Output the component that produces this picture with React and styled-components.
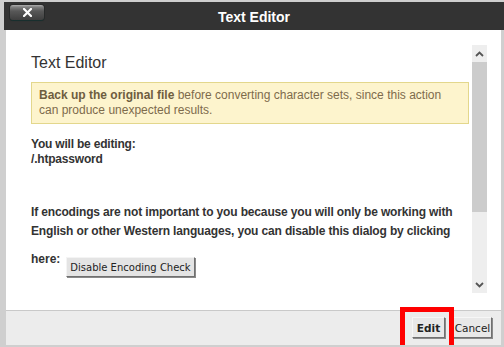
import React from 'react';
import styled, { createGlobalStyle } from 'styled-components';

const GlobalStyle = createGlobalStyle`
  body {
    margin: 0;
    background: #cfcfcf;
    font-family: 'Liberation Sans', Arial, sans-serif;
  }
`;

function CloseIcon() {
  return (
    <svg width="9" height="9" viewBox="0 0 9 9">
      <path d="M1 1 L8 8 M8 1 L1 8" stroke="#fff" strokeWidth="2.2" strokeLinecap="square" />
    </svg>
  );
}

function Chevron({ down }) {
  return (
    <svg width="9" height="6" viewBox="0 0 9 6">
      <path d={down ? 'M1 1 L4.5 4.5 L8 1' : 'M1 5 L4.5 1.5 L8 5'} stroke="#555" strokeWidth="1.8" fill="none" />
    </svg>
  );
}

function App() {
  return (
    <>
      <GlobalStyle />
      <Dialog>
        <TitleBar>
          <CloseButton><CloseIcon /></CloseButton>
          <Title>Text Editor</Title>
          <span />
        </TitleBar>
        <Main>
          <Content>
            <Heading>Text Editor</Heading>
            <Warning>
              <strong>Back up the original file</strong> before converting character sets, since this action can produce unexpected results.
            </Warning>
            <Editing>
              You will be editing:<br />/.htpassword
            </Editing>
            <Paragraph>
              If encodings are not important to you because you will only be working with English or other Western languages, you can disable this dialog by clicking
            </Paragraph>
            <HereRow>
              <span>here:</span>
              <PlainButton>Disable Encoding Check</PlainButton>
            </HereRow>
          </Content>
          <Scrollbar>
            <ScrollArrow><Chevron /></ScrollArrow>
            <Thumb />
            <Track />
            <ScrollArrow><Chevron down /></ScrollArrow>
          </Scrollbar>
        </Main>
        <Footer>
          <Highlight>
            <FooterButton $bold $width={33}>Edit</FooterButton>
          </Highlight>
          <FooterButton $width={39} $cancel>Cancel</FooterButton>
        </Footer>
      </Dialog>
    </>
  );
}

const Dialog = styled.div`
  margin: 2px 0 0 4px;
  width: 500px;
  display: flex;
  flex-direction: column;
`;

const TitleBar = styled.div`
  height: 28px;
  background: #333333;
  display: grid;
  grid-template-columns: 1fr auto 1fr;
  align-items: center;
`;

const CloseButton = styled.div`
  justify-self: start;
  align-self: start;
  margin: 3px 0 0 6px;
  width: 34px;
  height: 15px;
  box-sizing: border-box;
  border-radius: 3px;
  background: linear-gradient(#b0b0b0 0, #808080 2px, #585858 6px, #3e3e3e 100%);
  box-shadow: 0 1px 1px #17302f, 0 0 0 1px #2a2a2a;
  display: flex;
  align-items: center;
  justify-content: center;
`;

const Title = styled.div`
  color: #fff;
  font-weight: bold;
  font-size: 14px;
  padding-top: 1px;
`;

const Main = styled.div`
  margin: 0 3px 0 2px;
  height: 280px;
  background: #fff;
  display: flex;
  overflow: hidden;
`;

const Content = styled.div`
  width: 438px;
  padding: 23px 0 0 25px;
  color: #333;
`;

const Heading = styled.div`
  font-size: 16px;
  line-height: 20px;
  color: #333;
`;

const Warning = styled.div`
  margin-top: 9px;
  padding: 5px 7px;
  background: #fdf4cd;
  border: 1px solid #e3d78c;
  color: #7d6b4c;
  font-size: 12px;
  line-height: 15px;

  strong {
    color: #6e5d3f;
  }
`;

const Editing = styled.div`
  margin-top: 13px;
  font-size: 12px;
  line-height: 15px;
  font-weight: bold;
  letter-spacing: -0.2px;
`;

const Paragraph = styled.div`
  margin-top: 36px;
  font-size: 12px;
  line-height: 19px;
  font-weight: bold;
  letter-spacing: -0.15px;
`;

const HereRow = styled.div`
  margin-top: 9px;
  display: flex;
  align-items: flex-start;
  gap: 6px;
  font-size: 12px;
  line-height: 19px;
  font-weight: bold;
`;

const PlainButton = styled.button`
  margin-top: 7px;
  height: 20px;
  padding: 0 3px;
  font-family: 'DejaVu Sans', Verdana, sans-serif;
  font-size: 10px;
  color: #222;
  background: #e4e4e4;
  border: 1px solid;
  border-color: #f4f4f4 #707070 #707070 #f4f4f4;
  box-shadow: 1px 1px 0 #8a8a8a;
`;

const Scrollbar = styled.div`
  margin: 15px 0 0 3px;
  width: 15px;
  height: 248px;
  display: flex;
  flex-direction: column;
  background: #eeeeee;
`;

const ScrollArrow = styled.div`
  height: 17px;
  display: flex;
  align-items: center;
  justify-content: center;
`;

const Thumb = styled.div`
  height: 150px;
  background: #cccccc;
`;

const Track = styled.div`
  flex: 1;
`;

const Footer = styled.div`
  margin: 0 3px 0 2px;
  height: 34px;
  background: #ececec;
  border-top: 1px solid #c9c9c9;
  display: flex;
  justify-content: flex-end;
  align-items: flex-start;
  padding-right: 9px;
`;

const Highlight = styled.div`
  margin-top: -4px;
  height: 30px;
  border: 5px solid #ff0000;
  padding: 5px 4px 0 7px;
  position: relative;
  z-index: 1;
`;

const FooterButton = styled.button`
  width: ${p => p.$width}px;
  height: 21px;
  margin: ${p => (p.$cancel ? '6px 0 0 -1px' : '0')};
  padding: 0;
  font-family: 'DejaVu Sans', Verdana, sans-serif;
  font-size: 10.5px;
  font-weight: ${p => (p.$bold ? 'bold' : 'normal')};
  color: #222;
  background: #e8e8e8;
  border: 1px solid;
  border-color: #f6f6f6 #707070 #707070 #f6f6f6;
  box-shadow: 1px 1px 0 #8a8a8a;
`;

export default App;
